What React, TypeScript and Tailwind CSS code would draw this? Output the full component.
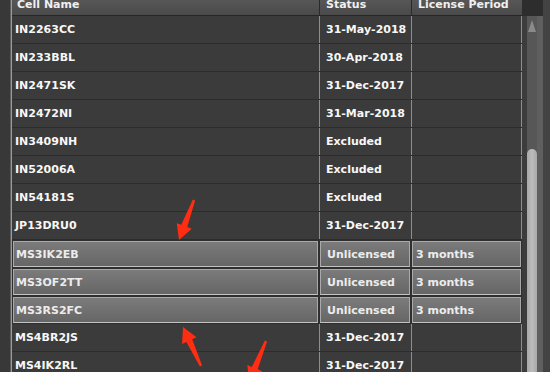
const rows = [
  { name: "IN2263CC", status: "31-May-2018", period: "" },
  { name: "IN233BBL", status: "30-Apr-2018", period: "" },
  { name: "IN2471SK", status: "31-Dec-2017", period: "" },
  { name: "IN2472NI", status: "31-Mar-2018", period: "" },
  { name: "IN3409NH", status: "Excluded", period: "" },
  { name: "IN52006A", status: "Excluded", period: "" },
  { name: "IN54181S", status: "Excluded", period: "" },
  { name: "JP13DRU0", status: "31-Dec-2017", period: "" },
  { name: "MS3IK2EB", status: "Unlicensed", period: "3 months", selected: true },
  { name: "MS3OF2TT", status: "Unlicensed", period: "3 months", selected: true },
  { name: "MS3RS2FC", status: "Unlicensed", period: "3 months", selected: true },
  { name: "MS4BR2JS", status: "31-Dec-2017", period: "" },
  { name: "MS4IK2RL", status: "31-Dec-2017", period: "" },
];

type Pt = [number, number];

// tapered annotation arrow, tail -> tip
function arrowPoints(tail: Pt, tip: Pt) {
  const dx = tip[0] - tail[0];
  const dy = tip[1] - tail[1];
  const len = Math.hypot(dx, dy);
  const ux = dx / len;
  const uy = dy / len;
  const nx = -uy;
  const ny = ux;
  const neck: Pt = [tip[0] - ux * 15, tip[1] - uy * 15];
  const p = (b: Pt, w: number): string => `${b[0] + nx * w},${b[1] + ny * w}`;
  return [
    p(tail, 1.2),
    p(neck, 3.2),
    p(neck, 8),
    `${tip[0]},${tip[1]}`,
    p(neck, -8),
    p(neck, -3.2),
    p(tail, -1.2),
  ].join(" ");
}

const cellText = "font-['DejaVu_Sans',sans-serif] text-[11px] font-bold leading-none";

function Row({ r }: { r: (typeof rows)[number] }) {
  if (r.selected) {
    const cell =
      "m-[1px] flex items-center border border-[#a9a9a9] border-b-[#c4c4c4] bg-gradient-to-b from-[#7b7b7b] to-[#666666] text-[#ececec]";
    return (
      <div className="grid h-[28px] grid-cols-[307px_92px_111px] bg-[#2f2f2f]">
        <div className={`${cell} pl-[2px]`}>{r.name}</div>
        <div className={`${cell} pl-[6px]`}>{r.status}</div>
        <div className={`${cell} pl-[3px]`}>{r.period}</div>
      </div>
    );
  }
  return (
    <div className="grid h-[28px] grid-cols-[307px_92px_111px] border-b border-[#2c2c2c] bg-[#3b3b3b] text-[#f7f7f7]">
      <div className="flex items-center pl-[3px]">{r.name}</div>
      <div className="flex items-center border-l border-[#8e8e8e] pl-[6px]">{r.status}</div>
      <div className="flex items-center border-l border-r border-[#8e8e8e] pl-[3px]">{r.period}</div>
    </div>
  );
}

export default function App() {
  return (
    <div className={`relative h-[372px] w-[550px] overflow-hidden bg-[#3a3a3a] ${cellText}`}>
      <div className="flex h-full">
        {/* left frame */}
        <div className="flex w-[12px] shrink-0">
          <div className="w-[10px] bg-[#383838]" />
          <div className="w-[1px] bg-[#5e5e5e]" />
          <div className="w-[1px] bg-[#9a9a9a]" />
        </div>

        {/* grid */}
        <div className="w-[510px] shrink-0">
          <div className="-mt-[7px] grid h-[23px] grid-cols-[307px_92px_111px] border-b border-[#262626] bg-gradient-to-b from-[#5d5d5d] to-[#4a4a4a] text-[#f0f0f0]">
            <div className="flex items-center pl-[5px]">Cell Name</div>
            <div className="flex items-center border-l border-[#2a2a2a] pl-[6px]">Status</div>
            <div className="flex items-center border-l border-[#2a2a2a] pl-[6px]">License Period</div>
          </div>
          {rows.map((r) => (
            <Row key={r.name} r={r} />
          ))}
        </div>

        {/* scrollbar */}
        <div className="flex w-[21px] shrink-0 flex-col">
          <div className="h-[16px] bg-[#2d2d2d]" />
          <div className="flex flex-1">
            <div className="w-[5px] bg-[#3c3c3c]" />
            <div className="flex w-[10px] flex-col bg-[#575757]">
              <svg width="10" height="20" viewBox="0 0 10 20" className="mt-[2px]">
                <polygon points="5,2 9,14 1,14" fill="#8a8a8a" />
              </svg>
              <div className="mt-[111px] flex-1 rounded-t-[5px] bg-gradient-to-r from-[#a8a8a8] via-[#bcbcbc] to-[#a8a8a8]" />
            </div>
            <div className="w-[6px] bg-[#5f5f5f]" />
          </div>
        </div>

        {/* right frame */}
        <div className="flex-1 bg-[#434343]" />
      </div>

      {/* annotation arrows */}
      <svg className="pointer-events-none absolute inset-0" width="550" height="372" viewBox="0 0 550 372">
        <polygon points={arrowPoints([194, 200], [179, 240])} fill="#ff2d12" />
        <polygon points={arrowPoints([201, 366], [183, 327])} fill="#ff2d12" />
        <polygon points={arrowPoints([266, 341], [249, 382])} fill="#ff2d12" />
      </svg>
    </div>
  );
}
